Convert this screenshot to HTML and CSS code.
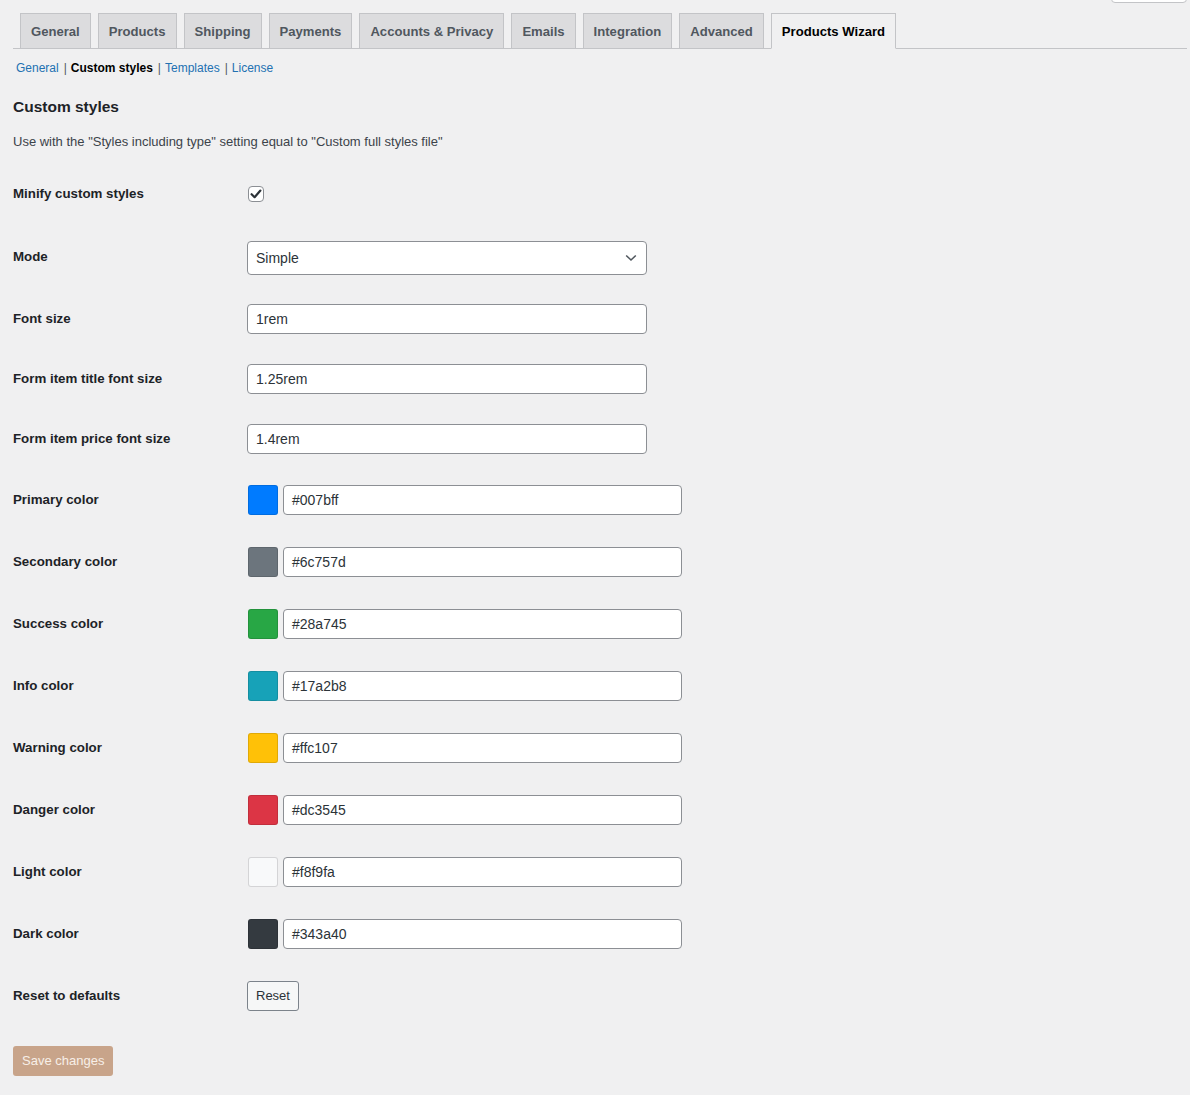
FILE: index.html
```html
<!DOCTYPE html>
<html lang="en">
<head>
<meta charset="utf-8">
<title>Products Wizard — Custom styles</title>
<link rel="stylesheet" href="styles.css">
</head>
<body>
<div class="page">
  <div class="help-tab"></div>
  <nav class="tabs">
    <a class="tab">General</a>
    <a class="tab">Products</a>
    <a class="tab">Shipping</a>
    <a class="tab">Payments</a>
    <a class="tab">Accounts &amp; Privacy</a>
    <a class="tab">Emails</a>
    <a class="tab">Integration</a>
    <a class="tab">Advanced</a>
    <a class="tab tab-active">Products Wizard</a>
  </nav>
  <ul class="subnav">
    <li><a class="sublink">General</a></li>
    <li><span class="sep">|</span><span class="subcurrent">Custom styles</span></li>
    <li><span class="sep">|</span><a class="sublink">Templates</a></li>
    <li><span class="sep">|</span><a class="sublink">License</a></li>
  </ul>

  <h2 class="heading">Custom styles</h2>
  <p class="desc">Use with the "Styles including type" setting equal to "Custom full styles file"</p>

  <form class="form">
    <div class="row row-check">
      <div class="label">Minify custom styles</div>
      <div class="field">
        <span class="checkbox">
          <svg width="14" height="14" viewBox="0 0 14 14"><path d="M2.6 7.2 L5.6 10.2 L11.4 3.6" fill="none" stroke="#2c3338" stroke-width="2.2" stroke-linecap="round" stroke-linejoin="round"/></svg>
        </span>
      </div>
    </div>
    <div class="row row-select">
      <div class="label">Mode</div>
      <div class="field">
        <div class="select">
          <span>Simple</span>
          <svg class="chev" width="12" height="8" viewBox="0 0 12 8"><path d="M1.2 1.5 L6 6 L10.8 1.5" fill="none" stroke="#50575e" stroke-width="1.6"/></svg>
        </div>
      </div>
    </div>
    <div class="row">
      <div class="label">Font size</div>
      <div class="field"><div class="input">1rem</div></div>
    </div>
    <div class="row">
      <div class="label">Form item title font size</div>
      <div class="field"><div class="input">1.25rem</div></div>
    </div>
    <div class="row">
      <div class="label">Form item price font size</div>
      <div class="field"><div class="input">1.4rem</div></div>
    </div>
    <div class="row row-color">
      <div class="label">Primary color</div>
      <div class="field color-field"><span class="swatch" style="background:#007bff"></span><div class="input input-color">#007bff</div></div>
    </div>
    <div class="row row-color">
      <div class="label">Secondary color</div>
      <div class="field color-field"><span class="swatch" style="background:#6c757d"></span><div class="input input-color">#6c757d</div></div>
    </div>
    <div class="row row-color">
      <div class="label">Success color</div>
      <div class="field color-field"><span class="swatch" style="background:#28a745"></span><div class="input input-color">#28a745</div></div>
    </div>
    <div class="row row-color">
      <div class="label">Info color</div>
      <div class="field color-field"><span class="swatch" style="background:#17a2b8"></span><div class="input input-color">#17a2b8</div></div>
    </div>
    <div class="row row-color">
      <div class="label">Warning color</div>
      <div class="field color-field"><span class="swatch" style="background:#ffc107"></span><div class="input input-color">#ffc107</div></div>
    </div>
    <div class="row row-color">
      <div class="label">Danger color</div>
      <div class="field color-field"><span class="swatch" style="background:#dc3545"></span><div class="input input-color">#dc3545</div></div>
    </div>
    <div class="row row-color">
      <div class="label">Light color</div>
      <div class="field color-field"><span class="swatch swatch-light" style="background:#f8f9fa"></span><div class="input input-color">#f8f9fa</div></div>
    </div>
    <div class="row row-color">
      <div class="label">Dark color</div>
      <div class="field color-field"><span class="swatch" style="background:#343a40"></span><div class="input input-color">#343a40</div></div>
    </div>
    <div class="row row-color">
      <div class="label">Reset to defaults</div>
      <div class="field"><span class="btn-reset">Reset</span></div>
    </div>
    <div class="submit">
      <span class="btn-save">Save changes</span>
    </div>
  </form>
</div>
</body>
</html>
```

FILE: styles.css
```css
* { box-sizing: border-box; }

html, body {
  margin: 0;
  padding: 0;
  background: #f0f0f1;
}

body {
  font-family: "Liberation Sans", Arial, sans-serif;
  color: #3c434a;
  font-size: 13px;
}

.page {
  position: relative;
  padding: 0 3px 20px 13px;
  min-height: 1095px;
}

.help-tab {
  position: absolute;
  top: -20px;
  right: 3px;
  width: 76px;
  height: 23px;
  background: #fff;
  border: 1px solid #c3c4c7;
  border-radius: 0 0 4px 4px;
}

.tabs {
  display: flex;
  padding-top: 13px;
  border-bottom: 1px solid #c3c4c7;
}

.tab {
  display: block;
  margin-left: 7px;
  margin-bottom: -1px;
  padding: 5px 10px;
  height: 36px;
  line-height: 25px;
  font-size: 13.1px;
  font-weight: 700;
  color: #50575e;
  background: #dcdcde;
  border: 1px solid #c3c4c7;
  white-space: nowrap;
}

.tab-active {
  background: #f0f0f1;
  color: #000;
  border-bottom-color: #f0f0f1;
}

.subnav {
  list-style: none;
  display: flex;
  margin: 9px 0 0;
  padding: 0 0 0 3px;
  height: 20px;
  line-height: 20px;
  font-size: 12px;
}

.sublink { color: #2271b1; }
.subcurrent { color: #000; font-weight: 700; }
.sep {
  color: #50575e;
  margin: 0 4px 0 5px;
}

.heading {
  margin: 19px 0 0;
  font-size: 15.5px;
  line-height: 20px;
  font-weight: 700;
  color: #1d2327;
}

.desc {
  margin: 16px 0 0;
  line-height: 18px;
  font-size: 13px;
  color: #3c434a;
}

.form {
  margin-top: 12px;
}

.row {
  display: grid;
  grid-template-columns: 234px 1fr;
  align-items: center;
  height: 60px;
}

.row-check { height: 62px; }
.row-select { height: 64px; }
.row-color { height: 62px; }

.label {
  font-size: 13.3px;
  font-weight: 700;
  color: #1d2327;
  line-height: 18px;
}

.field {
  display: flex;
  align-items: center;
}

.checkbox {
  margin-left: 1px;
  width: 16px;
  height: 16px;
  border: 1px solid #8c8f94;
  border-radius: 4px;
  background: #fff;
  display: flex;
  align-items: center;
  justify-content: center;
}

.select {
  width: 400px;
  height: 34px;
  margin-top: 1px;
  border: 1px solid #8c8f94;
  border-radius: 4px;
  background: #fff;
  display: flex;
  align-items: center;
  justify-content: space-between;
  padding: 0 8px 0 8px;
  font-size: 14px;
  color: #2c3338;
}

.chev { margin-right: 1px; }

.input {
  width: 400px;
  height: 30px;
  border: 1px solid #8c8f94;
  border-radius: 4px;
  background: #fff;
  padding: 0 8px;
  line-height: 28px;
  font-size: 14px;
  color: #2c3338;
}

.color-field { gap: 5px; }

.swatch {
  margin-left: 1px;
  width: 30px;
  height: 30px;
  border-radius: 3px;
  box-shadow: inset 0 0 0 1px rgba(0, 0, 0, 0.12);
}

.swatch-light {
  box-shadow: inset 0 0 0 1px #d4d4d6;
}

.input-color {
  width: 399px;
}

.btn-reset {
  display: inline-block;
  height: 30px;
  line-height: 28px;
  padding: 0 8px;
  border: 1px solid #7c838b;
  border-radius: 3px;
  background: #f6f7f7;
  color: #2c3338;
  font-size: 13px;
}

.submit {
  margin-top: 19px;
}

.btn-save {
  display: inline-block;
  height: 30px;
  line-height: 30px;
  padding: 0 9px;
  border-radius: 3px;
  background: #c8a48a;
  color: #f7efe8;
  font-size: 13px;
}
```
